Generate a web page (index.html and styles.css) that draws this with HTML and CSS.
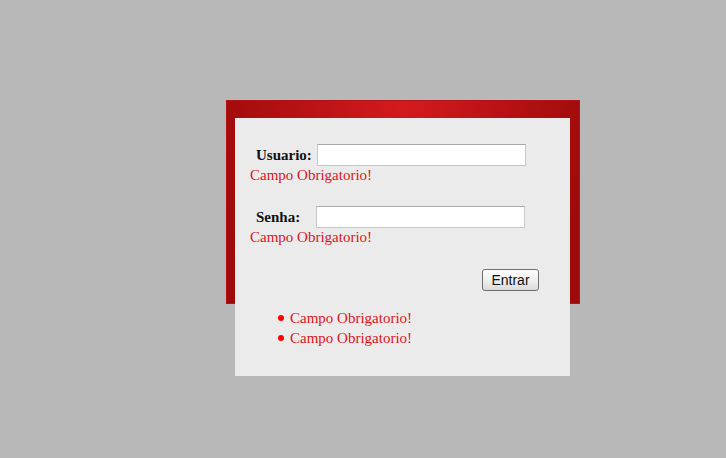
FILE: index.html
```html
<!DOCTYPE html>
<html lang="pt">
<head>
  <meta charset="UTF-8">
  <title>Login</title>
  <link rel="stylesheet" href="styles.css">
</head>
<body>
  <div class="moldura">
    <form class="painel" onsubmit="return false">
      <div class="linha">
        <label class="rotulo" for="usuario">Usuario:</label>
        <input class="campo" type="text" id="usuario">
      </div>
      <div class="erro">Campo Obrigatorio!</div>

      <div class="linha linha-senha">
        <label class="rotulo" for="senha">Senha:</label>
        <input class="campo" type="password" id="senha">
      </div>
      <div class="erro">Campo Obrigatorio!</div>

      <div class="acoes">
        <button class="botao" type="submit">Entrar</button>
      </div>

      <ul class="resumo">
        <li>Campo Obrigatorio!</li>
        <li>Campo Obrigatorio!</li>
      </ul>
    </form>
  </div>
</body>
</html>
```

FILE: styles.css
```css
* {
  margin: 0;
  padding: 0;
  box-sizing: border-box;
}
body {
  background: #b8b8b8;
  font-family: 'Liberation Serif', 'Times New Roman', serif;
  padding: 100px 0 0 226px;
  height: 100vh;
  overflow: hidden;
}
.moldura {
  width: 354px;
  height: 204px;
  padding: 17px 0 0 8px;
  background: radial-gradient(ellipse 55% 140% at 50% 0%, #d41a1d 0%, #bb1316 45%, #9f0a0a 100%);
  border: 1px solid #b51216;
}
.painel {
  width: 335px;
  height: 258px;
  background: #ebebeb;
  padding: 26px 0 0 15px;
}
.linha {
  display: flex;
  align-items: center;
  height: 22px;
}
.linha-senha {
  margin-top: 22px;
}
.rotulo {
  width: 67px;
  flex-shrink: 0;
  padding-left: 6px;
  font-weight: bold;
  font-size: 15px;
  color: #111;
}
.linha-senha .rotulo {
  width: 66px;
}
.campo {
  width: 209px;
  height: 22px;
  border: 1px solid #c8c8c8;
  border-top-color: #a9a9a9;
  background: #fff;
  outline: none;
}
.erro {
  color: #dc1419;
  font-size: 15px;
  line-height: 18px;
}
.acoes {
  display: flex;
  justify-content: flex-end;
  margin-top: 23px;
  padding-right: 31px;
}
.botao {
  width: 57px;
  height: 22px;
  font-family: 'Liberation Sans', Arial, sans-serif;
  font-size: 14px;
  color: #111;
  background: linear-gradient(to bottom, #fdfdfd 0%, #ececec 60%, #dadada 100%);
  border: 1px solid #707070;
  border-radius: 3px;
}
.resumo {
  margin-top: 17px;
  padding-left: 28px;
  list-style: none;
  color: #dc1419;
  font-size: 15px;
  line-height: 20px;
}
.resumo li::before {
  content: '';
  display: inline-block;
  width: 6px;
  height: 6px;
  margin: 0 6px 2px 0;
  border-radius: 50%;
  background: #f00;
}
```
